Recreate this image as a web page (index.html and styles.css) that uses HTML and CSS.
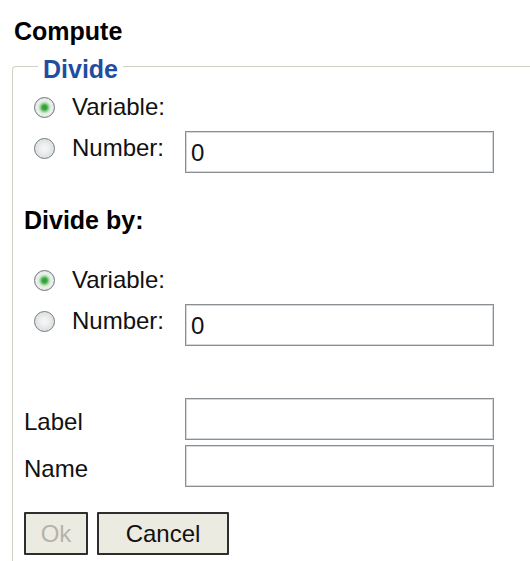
FILE: index.html
```html
<!DOCTYPE html>
<html lang="en">
<head>
<meta charset="utf-8">
<title>Compute</title>
<link rel="stylesheet" href="styles.css">
</head>
<body>
<div class="page">
  <div class="title">Compute</div>
  <fieldset class="group">
    <legend class="group-title">Divide</legend>

    <div class="choice">
      <input type="radio" class="radio" name="dividend" checked>
      <span class="choice-label">Variable:</span>
    </div>
    <div class="entry">
      <div class="choice choice--head">
        <input type="radio" class="radio" name="dividend">
        <span class="choice-label">Number:</span>
      </div>
      <input type="text" class="field" value="0">
    </div>

    <div class="subhead">Divide by:</div>

    <div class="choice choice--after-head">
      <input type="radio" class="radio" name="divisor" checked>
      <span class="choice-label">Variable:</span>
    </div>
    <div class="entry">
      <div class="choice choice--head">
        <input type="radio" class="radio" name="divisor">
        <span class="choice-label">Number:</span>
      </div>
      <input type="text" class="field" value="0">
    </div>

    <div class="named">
      <label class="named-label" for="f-label">Label</label>
      <input type="text" class="field" id="f-label">
      <label class="named-label" for="f-name">Name</label>
      <input type="text" class="field" id="f-name">
    </div>

    <div class="actions">
      <button type="button" class="btn btn--ok" disabled>Ok</button>
      <button type="button" class="btn btn--cancel">Cancel</button>
    </div>
  </fieldset>
</div>
</body>
</html>
```

FILE: styles.css
```css
html {
  overflow: hidden;
}

body {
  margin: 0;
  background: #ffffff;
  color: #111111;
  font-family: "Liberation Sans", Arial, sans-serif;
  font-size: 24px;
}

.page {
  padding-top: 17px;
}

.title {
  margin: 0 0 4px 14px;
  font-size: 25px;
  font-weight: bold;
  line-height: 28px;
  color: #000000;
}

.group {
  margin: 0 0 0 12px;
  padding: 10px 11px 6px 11px;
  border: 1px solid #d0d0c6;
  border-right: none;
  border-bottom: none;
  border-top-left-radius: 4px;
  min-width: 0;
}

.group-title {
  margin-left: 14px;
  padding: 6px 5px 0 5px;
  font-size: 25px;
  font-weight: bold;
  line-height: 28px;
  color: #1f4e9e;
}

/* radio rows */
.choice {
  display: flex;
  align-items: center;
  height: 28px;
  line-height: 28px;
}

.choice--head {
  margin-top: 3px;
}

.choice--after-head {
  margin-top: 32px;
}

.radio {
  appearance: none;
  -webkit-appearance: none;
  flex: none;
  width: 21px;
  height: 21px;
  margin: 0 17px 0 10px;
  border: 1px solid #6f7882;
  border-radius: 50%;
  background: radial-gradient(circle, #f6f7f7 0, #eceeed 5px, #d9dcdc 10px);
  box-shadow: inset 0 0 0 1px #e4e7e7;
}

.radio:checked {
  background: radial-gradient(circle, #2f9a35 0, #3fa844 2.5px, #8fcf92 4px, #dbeedb 6px, #eef2ee 8px, #d6dbd6 10px);
}

.choice-label {
  white-space: nowrap;
}

/* radio row followed by its text box */
.entry {
  display: grid;
  grid-template-columns: 161px 309px;
  align-items: start;
  margin-top: 10px;
}

.field {
  box-sizing: border-box;
  width: 309px;
  height: 42px;
  margin: 0;
  padding: 7px 4px 5px 5px;
  border: 1px solid #8a8f93;
  box-shadow: inset 0 0 0 1px #d4d8da;
  background: #ffffff;
  font-family: "Liberation Sans", Arial, sans-serif;
  font-size: 24px;
  line-height: 28px;
  color: #111111;
  outline: none;
}

.subhead {
  margin-top: 33px;
  font-size: 25px;
  font-weight: bold;
  line-height: 28px;
  color: #000000;
}

/* label / name pairs */
.named {
  display: grid;
  grid-template-columns: 161px 309px;
  row-gap: 5px;
  align-items: center;
  margin-top: 52px;
}

.named-label {
  padding-top: 6px;
  line-height: 28px;
}

/* buttons */
.actions {
  display: flex;
  gap: 9px;
  margin-top: 25px;
}

.btn {
  box-sizing: border-box;
  height: 43px;
  padding: 0;
  border: 2px solid #2e2e2e;
  border-radius: 1px;
  background: #ecebe2;
  font-family: "Liberation Sans", Arial, sans-serif;
  font-size: 24px;
  color: #111111;
}

.btn--ok {
  width: 64px;
}

.btn--ok:disabled {
  color: #b4b4aa;
}

.btn--cancel {
  width: 132px;
}
```
